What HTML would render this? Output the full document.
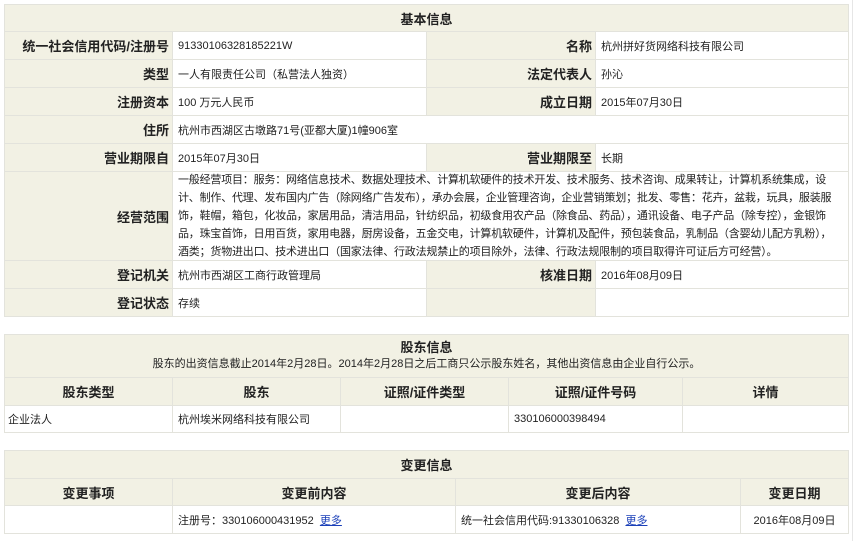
<!DOCTYPE html>
<html><head><meta charset="utf-8"><style>
*{margin:0;padding:0;box-sizing:border-box}
body{width:865px;height:541px;background:#fff;font-family:"Liberation Sans","Noto Sans CJK SC",sans-serif;font-size:11px;color:#222;position:relative;overflow:hidden}
.c{position:absolute;border:1px solid #e3e3dc;display:flex;align-items:center;padding:0 5px;white-space:nowrap;overflow:hidden}
.b{background:#f2f1e4}
.l{justify-content:flex-end;font-weight:bold;font-size:13px;color:#222;padding-right:3px}
.h{justify-content:center;font-weight:bold;font-size:13px}
.ctr{justify-content:center}
a{color:#1a3fb8;text-decoration:underline}
.vl{position:absolute;left:852px;top:0;width:1px;height:541px;background:#e6e6e6}
</style></head><body>
<div class="vl"></div>
<div class="c b h" style="left:4px;top:4px;width:845px;height:28px">基本信息</div>

<div class="c b l" style="left:4px;top:31px;width:169px;height:29px">统一社会信用代码/注册号</div>
<div class="c" style="left:172px;top:31px;width:255px;height:29px">91330106328185221W</div>
<div class="c b l" style="left:426px;top:31px;width:170px;height:29px">名称</div>
<div class="c" style="left:595px;top:31px;width:254px;height:29px">杭州拼好货网络科技有限公司</div>

<div class="c b l" style="left:4px;top:59px;width:169px;height:29px">类型</div>
<div class="c" style="left:172px;top:59px;width:255px;height:29px">一人有限责任公司（私营法人独资）</div>
<div class="c b l" style="left:426px;top:59px;width:170px;height:29px">法定代表人</div>
<div class="c" style="left:595px;top:59px;width:254px;height:29px">孙沁</div>

<div class="c b l" style="left:4px;top:87px;width:169px;height:29px">注册资本</div>
<div class="c" style="left:172px;top:87px;width:255px;height:29px">100 万元人民币</div>
<div class="c b l" style="left:426px;top:87px;width:170px;height:29px">成立日期</div>
<div class="c" style="left:595px;top:87px;width:254px;height:29px">2015年07月30日</div>

<div class="c b l" style="left:4px;top:115px;width:169px;height:29px">住所</div>
<div class="c" style="left:172px;top:115px;width:677px;height:29px">杭州市西湖区古墩路71号(亚都大厦)1幢906室</div>

<div class="c b l" style="left:4px;top:143px;width:169px;height:29px">营业期限自</div>
<div class="c" style="left:172px;top:143px;width:255px;height:29px">2015年07月30日</div>
<div class="c b l" style="left:426px;top:143px;width:170px;height:29px">营业期限至</div>
<div class="c" style="left:595px;top:143px;width:254px;height:29px">长期</div>

<div class="c b l" style="left:4px;top:171px;width:169px;height:90px">经营范围</div>
<div class="c" style="left:172px;top:171px;width:677px;height:90px;white-space:normal;line-height:18px;font-size:11px;letter-spacing:-0.2px;padding-right:12px">一般经营项目：服务：网络信息技术、数据处理技术、计算机软硬件的技术开发、技术服务、技术咨询、成果转让，计算机系统集成，设计、制作、代理、发布国内广告（除网络广告发布），承办会展，企业管理咨询，企业营销策划；批发、零售：花卉，盆栽，玩具，服装服饰，鞋帽，箱包，化妆品，家居用品，清洁用品，针纺织品，初级食用农产品（除食品、药品），通讯设备、电子产品（除专控），金银饰品，珠宝首饰，日用百货，家用电器，厨房设备，五金交电，计算机软硬件，计算机及配件，预包装食品，乳制品（含婴幼儿配方乳粉），酒类；货物进出口、技术进出口（国家法律、行政法规禁止的项目除外，法律、行政法规限制的项目取得许可证后方可经营）。</div>

<div class="c b l" style="left:4px;top:260px;width:169px;height:29px">登记机关</div>
<div class="c" style="left:172px;top:260px;width:255px;height:29px">杭州市西湖区工商行政管理局</div>
<div class="c b l" style="left:426px;top:260px;width:170px;height:29px">核准日期</div>
<div class="c" style="left:595px;top:260px;width:254px;height:29px">2016年08月09日</div>

<div class="c b l" style="left:4px;top:288px;width:169px;height:29px">登记状态</div>
<div class="c" style="left:172px;top:288px;width:255px;height:29px">存续</div>
<div class="c b" style="left:426px;top:288px;width:170px;height:29px"></div>
<div class="c" style="left:595px;top:288px;width:254px;height:29px"></div>

<div class="c b" style="left:4px;top:334px;width:845px;height:44px;flex-direction:column;justify-content:center;line-height:16px">
<div style="font-weight:bold;font-size:13px">股东信息</div>
<div style="font-size:11px">股东的出资信息截止2014年2月28日。2014年2月28日之后工商只公示股东姓名，其他出资信息由企业自行公示。</div></div>
<div class="c b h" style="left:4px;top:377px;width:169px;height:29px">股东类型</div>
<div class="c b h" style="left:172px;top:377px;width:169px;height:29px">股东</div>
<div class="c b h" style="left:340px;top:377px;width:169px;height:29px">证照/证件类型</div>
<div class="c b h" style="left:508px;top:377px;width:175px;height:29px">证照/证件号码</div>
<div class="c b h" style="left:682px;top:377px;width:167px;height:29px">详情</div>
<div class="c" style="left:4px;top:405px;width:169px;height:28px;padding-left:3px">企业法人</div>
<div class="c" style="left:172px;top:405px;width:169px;height:28px">杭州埃米网络科技有限公司</div>
<div class="c" style="left:340px;top:405px;width:169px;height:28px"></div>
<div class="c" style="left:508px;top:405px;width:175px;height:28px">330106000398494</div>
<div class="c" style="left:682px;top:405px;width:167px;height:28px"></div>

<div class="c b h" style="left:4px;top:450px;width:845px;height:29px">变更信息</div>
<div class="c b h" style="left:4px;top:478px;width:169px;height:28px">变更事项</div>
<div class="c b h" style="left:172px;top:478px;width:284px;height:28px">变更前内容</div>
<div class="c b h" style="left:455px;top:478px;width:286px;height:28px">变更后内容</div>
<div class="c b h" style="left:740px;top:478px;width:109px;height:28px">变更日期</div>
<div class="c" style="left:4px;top:505px;width:169px;height:29px"></div>
<div class="c" style="left:172px;top:505px;width:284px;height:29px">注册号：330106000431952&nbsp;&nbsp;<a>更多</a></div>
<div class="c" style="left:455px;top:505px;width:286px;height:29px">统一社会信用代码:91330106328&nbsp;&nbsp;<a>更多</a></div>
<div class="c ctr" style="left:740px;top:505px;width:109px;height:29px">2016年08月09日</div>
</body></html>
